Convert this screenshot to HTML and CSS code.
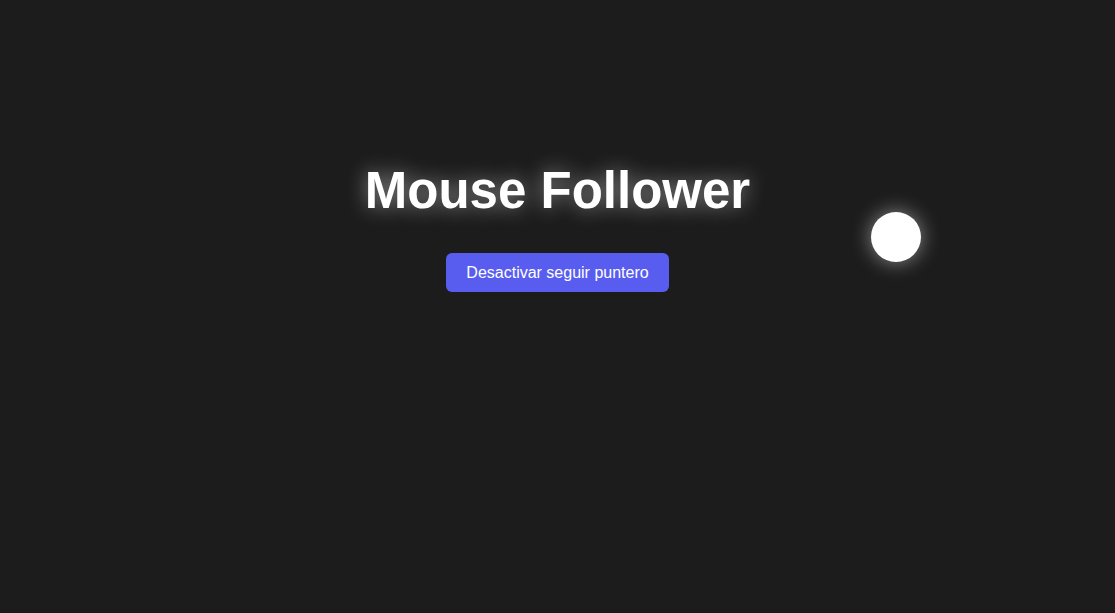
FILE: index.html
```html
<!DOCTYPE html>
<html lang="es">
<head>
<meta charset="utf-8">
<title>Mouse Follower</title>
<link rel="stylesheet" href="styles.css">
</head>
<body>
<main class="app">
  <h1 class="title">Mouse Follower</h1>
  <button class="toggle">Desactivar seguir puntero</button>
</main>
<div class="follower"></div>
</body>
</html>
```
FILE: styles.css
```css
html, body {
  margin: 0;
  height: 100%;
  background: #1c1c1c;
  font-family: "Liberation Sans", Arial, sans-serif;
  overflow: hidden;
}
.app {
  display: flex;
  flex-direction: column;
  align-items: center;
  padding-top: 161px;
}
.title {
  margin: 0 0 33px;
  font-size: 51px;
  font-weight: 700;
  color: #ffffff;
  text-shadow: 0 0 20px rgba(255, 255, 255, 0.5);
}
.toggle {
  background: #585df0;
  color: #ffffff;
  border: none;
  border-radius: 6px;
  padding: 10px 20px;
  font-family: "Liberation Sans", Arial, sans-serif;
  font-size: 16px;
  line-height: 19px;
}
.follower {
  position: absolute;
  left: 871px;
  top: 212px;
  width: 50px;
  height: 50px;
  border-radius: 50%;
  background: #ffffff;
  box-shadow: 0 0 20px rgba(255, 255, 255, 0.5);
}
```
